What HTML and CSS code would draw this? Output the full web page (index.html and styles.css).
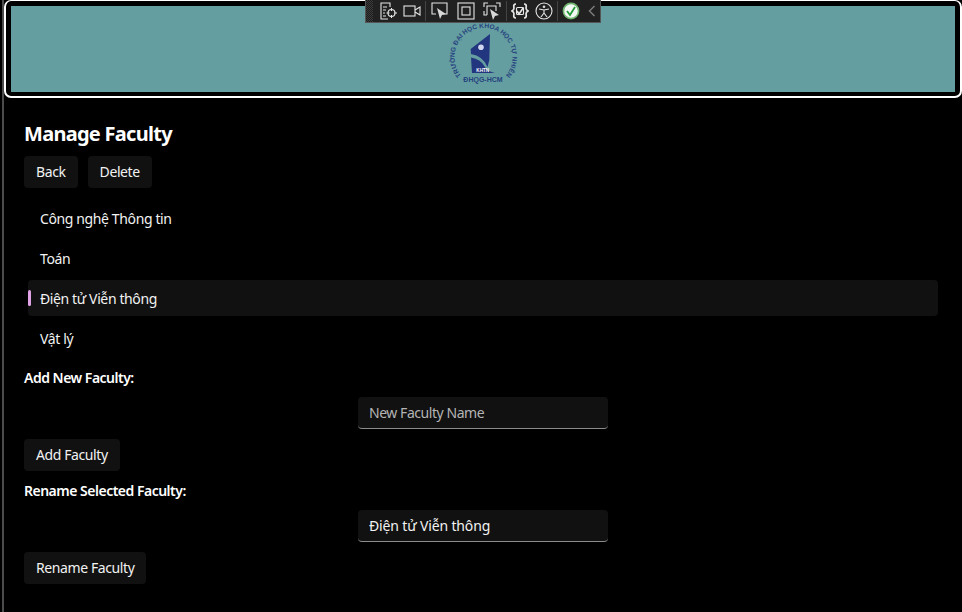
FILE: index.html
```html
<!DOCTYPE html>
<html lang="vi">
<head>
<meta charset="utf-8">
<title>Manage Faculty</title>
<link rel="stylesheet" href="styles.css">
</head>
<body>
<div class="window">
  <header class="banner">
    <div class="banner-fill">
      <svg class="logo" viewBox="0 0 80 76" width="80" height="76">
        <defs><path id="arc" d="M 18.3 60.6 A 29 29 0 1 1 62.7 60.6"/></defs>
        <text class="logo-arc"><textPath href="#arc" textLength="131" lengthAdjust="spacing">TRƯỜNG ĐẠI HỌC KHOA HỌC TỰ NHIÊN</textPath></text>
        <path class="sail" d="M47 19 L27.7 34 L28 39 Q40 41 44.5 52 L46.3 45 Z"/>
        <path class="sail" d="M28 42.5 Q38 44 42 52 Q44 56 52 58 L29 58 Z"/>
        <circle class="flower" cx="38" cy="32.3" r="2.8"/>
        <text class="logo-tag" x="39.7" y="57" text-anchor="middle">KHTN</text>
        <text class="logo-foot" x="40" y="66.7" text-anchor="middle">ĐHQG-HCM</text>
      </svg>
    </div>
  </header>

  <div class="devbar">
    <span class="grip"></span>
    <svg class="ico m6" width="18" height="18" viewBox="0 0 18 18"><path d="M11 5V1H2v16h7M4 5h4M4 8h3M4 11h2M4 14h3"/><circle cx="12.5" cy="11" r="3.5"/><path d="M12.5 6v3M12.5 13v3M7.5 11h3M15 11h3"/></svg>
    <svg class="ico m6" width="18" height="18" viewBox="0 0 18 18"><rect x="1" y="4" width="11" height="10"/><path d="M12 8l5-3v8l-5-3"/></svg>
    <span class="sep m4"></span>
    <svg class="ico m5" width="18" height="18" viewBox="0 0 18 18"><path d="M5 12H1V1h15v11h-4"/><path class="solid" d="M6 6l9 6-4 1-2 4z"/></svg>
    <svg class="ico m8" width="18" height="18" viewBox="0 0 18 18"><rect x="1" y="1" width="16" height="16"/><rect x="5" y="5" width="8" height="8"/></svg>
    <svg class="ico m8" width="18" height="18" viewBox="0 0 18 18"><path d="M1 5V1h4M13 1h4v4M1 9v4h3M6 4h7v5M4 13V4h3"/><path class="solid" d="M7 7l9 6-4 1-2 4z"/></svg>
    <span class="sep m5"></span>
    <svg class="ico m4" width="18" height="18" viewBox="0 0 18 18"><path class="bold" d="M5 2Q2 2 3 6Q3 8 1 9Q3 10 3 12Q2 16 5 16M13 2Q16 2 15 6Q15 8 17 9Q15 10 15 12Q16 16 13 16"/><rect x="5.5" y="5.5" width="7" height="7" rx="1"/><path class="bold" d="M6 9l2 3 4.5-6.5"/></svg>
    <svg class="ico m6" width="18" height="18" viewBox="0 0 18 18"><circle cx="9" cy="9" r="8"/><circle class="solid" cx="9" cy="4.8" r="1.3"/><path d="M4 7l5 1 5-1M9 8v3M9 11l-3 4M9 11l3 4"/></svg>
    <span class="sep m4"></span>
    <svg class="check m4" width="18" height="18" viewBox="0 0 18 18"><circle class="check-disc" cx="9" cy="9" r="7.6"/><path class="check-mark" d="M5 9l3 4 5-8"/></svg>
    <svg class="chev m8" width="8" height="12" viewBox="0 0 8 12"><path d="M6.5 1L1.5 6l5 5"/></svg>
  </div>

  <main class="content">
    <h1 class="title">Manage Faculty</h1>
    <div class="actions">
      <button class="btn" type="button">Back</button>
      <button class="btn" type="button">Delete</button>
    </div>
    <ul class="faculty-list">
      <li class="faculty">Công nghệ Thông tin</li>
      <li class="faculty">Toán</li>
      <li class="faculty selected">Điện tử Viễn thông</li>
      <li class="faculty">Vật lý</li>
    </ul>
    <p class="label label-add">Add New Faculty:</p>
    <input class="field" type="text" placeholder="New Faculty Name">
    <button class="btn solo" type="button">Add Faculty</button>
    <p class="label label-rename">Rename Selected Faculty:</p>
    <input class="field" type="text" value="Điện tử Viễn thông">
    <button class="btn solo" type="button">Rename Faculty</button>
  </main>
</div>
</body>
</html>
```

FILE: styles.css
```css
* { box-sizing: border-box; }
html, body { margin: 0; height: 100%; background: #000; overflow: hidden; }
body { font-family: "Noto Sans", "Open Sans", sans-serif; color: #fff; font-size: 14px; }

.window {
  position: relative;
  margin-left: 2px;
  height: 612px;
  border-left: 2px solid #4c4c4c;
  display: flex;
  flex-direction: column;
}

.banner {
  height: 98px;
  border: 2px solid #fff;
  border-top-width: 1px;
  border-radius: 7px;
  padding: 5px 5px 4px;
  flex: none;
}
.banner-fill {
  height: 100%;
  background: #649ea0;
  display: flex;
  justify-content: center;
  align-items: flex-start;
  padding-top: 9px;
}
.logo { display: block; }
.logo-arc { font: 700 6.6px "Liberation Sans", sans-serif; fill: #26427f; }
.logo-tag { font: 700 4.6px "Liberation Sans", sans-serif; fill: #fff; }
.logo-foot { font: 700 7px "Liberation Sans", sans-serif; fill: #26427f; }
.sail { fill: #22357f; }
.flower { fill: #cfd6ee; }

.devbar {
  position: absolute;
  top: 0;
  left: 361px;
  width: 236px;
  height: 23px;
  display: flex;
  align-items: center;
  background: #212121;
  border: 1px solid #555;
  border-top: 0;
}
.m4 { margin-left: 4px; }
.m5 { margin-left: 5px; }
.m6 { margin-left: 6px; }
.m8 { margin-left: 8px; }
.grip {
  width: 7px;
  height: 22px;
  background: repeating-conic-gradient(#3d3d3d 0 25%, #1c1c1c 0 50%) 0 0 / 2px 2px;
}
.sep { width: 1px; height: 20px; background: #444; flex: none; }
.ico { fill: none; stroke: #e6e6e6; stroke-width: 1.1; flex: none; }
.ico .solid { fill: #d8d8d8; stroke: none; }
.ico .bold { stroke-width: 1.7; }
.check { flex: none; }
.check-disc { fill: #f4f8f4; stroke: #6fb56f; stroke-width: 1.6; }
.check-mark { fill: none; stroke: #1f9a36; stroke-width: 1.8; }
.chev { fill: none; stroke: #7a7a7a; stroke-width: 1.5; flex: none; }

.content {
  flex: 1;
  padding: 0 20px 0 20px;
  display: flex;
  flex-direction: column;
  align-items: flex-start;
}
.title {
  margin: 22px 0 8px;
  font-size: 20px;
  line-height: 28px;
  font-weight: 700;
  letter-spacing: -0.72px;
}
.actions { display: flex; gap: 10px; }
.btn {
  height: 32px;
  padding: 0 12px;
  border: 0;
  border-radius: 4px;
  background: #111;
  color: #f2f2f2;
  font: inherit;
  font-size: 14px;
  line-height: 32px;
  letter-spacing: -0.4px;
}
.faculty-list {
  list-style: none;
  margin: 12px 4px 0;
  padding: 0;
  width: calc(100% - 8px);
}
.faculty {
  position: relative;
  height: 36px;
  margin-bottom: 4px;
  padding-left: 12px;
  line-height: 37px;
  border-radius: 4px;
  letter-spacing: -0.38px;
  color: #f2f2f2;
}
.faculty.selected { background: #111; }
.faculty.selected::before {
  content: "";
  position: absolute;
  left: 0;
  top: 10px;
  width: 3px;
  height: 16px;
  border-radius: 2px;
  background: #e2a2e6;
}
.label {
  margin: 0;
  font-weight: 600;
  font-size: 14px;
  line-height: 20px;
  letter-spacing: -0.5px;
}
.label-add { margin-top: 8px; }
.field {
  display: block;
  align-self: center;
  width: 250px;
  height: 32px;
  margin-top: 9px;
  padding: 0 11px;
  border: 0;
  border-bottom: 1px solid #8c8c8c;
  border-radius: 4px;
  background: #111;
  color: #f2f2f2;
  font: inherit;
  font-size: 14px;
  letter-spacing: -0.15px;
  outline: none;
}
.field::placeholder { color: #b4b4b4; opacity: 1; letter-spacing: -0.45px; }
.solo { margin-top: 10px; }
.label-rename { margin-top: 10px; }
```
